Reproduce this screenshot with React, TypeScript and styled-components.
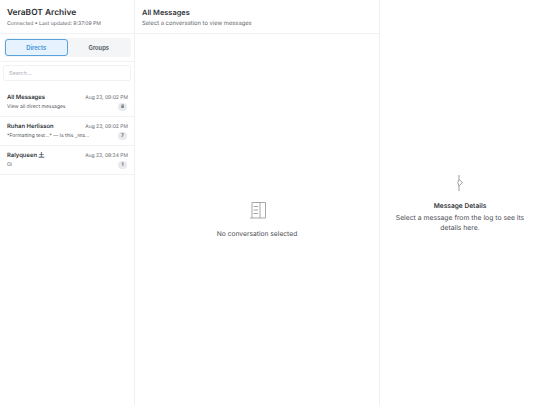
import React from "react";
import styled, { createGlobalStyle } from "styled-components";

const Global = createGlobalStyle`
  html, body { margin: 0; padding: 0; background: #fff; }
  body {
    font-family: Inter, "Liberation Sans", sans-serif;
    color: #18181b;
    text-rendering: geometricPrecision;
  }
  * { box-sizing: border-box; }
`;

const Page = styled.div`
  display: grid;
  grid-template-columns: 135px 245px 160px;
  width: 540px;
  height: 405px;
  overflow: hidden;
`;

const Sidebar = styled.aside`
  display: flex;
  flex-direction: column;
  border-right: 1px solid #eeeff1;
`;

const SideHeader = styled.header`
  height: 34px;
  padding: 8px 7px 0;
  border-bottom: 1px solid #f1f2f4;
`;

const Title = styled.h1`
  margin: 0;
  font-size: 8.4px;
  line-height: 11px;
  font-weight: 600;
  color: #2b2d32;
`;

const Subtitle = styled.p`
  margin: 2px 0 0;
  font-size: 5.1px;
  line-height: 7px;
  color: #63666c;
`;

const TabsWrap = styled.div`
  padding: 4px 3px 4px 4px;
  border-bottom: 1px solid #f1f2f4;
`;

const Tabs = styled.div`
  display: grid;
  grid-template-columns: 1fr 1fr;
  height: 19px;
  padding: 1px;
  border-radius: 3px;
  background: #f4f5f6;
`;

const Tab = styled.button<{ $active?: boolean }>`
  padding: 0;
  border: ${(p) => (p.$active ? "1px solid #5aa2da" : "none")};
  border-radius: 3px;
  background: ${(p) => (p.$active ? "#e6f3fe" : "transparent")};
  color: ${(p) => (p.$active ? "#3a8fd6" : "#4b4e54")};
  font-family: inherit;
  font-size: 5.8px;
  font-weight: 600;
`;

const SearchWrap = styled.div`
  padding: 3px 3px 7px;
`;

const Search = styled.div`
  height: 16px;
  padding: 1px 0 0 5px;
  display: flex;
  align-items: center;
  border: 1px solid #f1f2f4;
  border-radius: 2px;
  font-size: 5.4px;
  color: #aeb1b6;
`;

const Row = styled.div`
  display: grid;
  grid-template-columns: minmax(0, 1fr) auto;
  align-items: center;
  align-content: start;
  height: 29px;
  padding: 5px 6px 0 7px;
  border-bottom: 1px solid #f1f2f4;
`;

const Name = styled.span`
  font-size: 5.9px;
  line-height: 9px;
  font-weight: 600;
  color: #33353a;
`;

const Stamp = styled.span`
  padding-top: 1px;
  font-size: 5px;
  line-height: 8px;
  color: #6b6e74;
  text-align: right;
`;

const Preview = styled.span`
  font-size: 5px;
  line-height: 10px;
  color: #55585e;
  white-space: nowrap;
`;

const Count = styled.span`
  justify-self: end;
  width: 9px;
  height: 8px;
  margin-right: 1px;
  border-radius: 4px;
  background: #e7e9ec;
  color: #4b4e54;
  font-size: 4.8px;
  font-weight: 600;
  line-height: 8px;
  text-align: center;
`;

const Middle = styled.main`
  display: flex;
  flex-direction: column;
  border-right: 1px solid #eeeff1;
`;

const MiddleHeader = styled.header`
  height: 34px;
  padding: 8px 7px 0;
  border-bottom: 1px solid #f1f2f4;
`;

const PaneTitle = styled.h2`
  margin: 0;
  font-size: 7.4px;
  line-height: 9px;
  font-weight: 600;
  color: #33353a;
`;

const PaneSub = styled.p`
  margin: 3px 0 0;
  font-size: 5.8px;
  line-height: 8px;
  color: #63666c;
`;

const Empty = styled.div`
  flex: 1;
  display: flex;
  flex-direction: column;
  align-items: center;
  padding-top: 167px;
`;

const EmptyText = styled.p`
  margin: 10px 0 0;
  font-size: 6.7px;
  line-height: 9px;
  color: #4b4e54;
`;

const Details = styled.section`
  display: flex;
  flex-direction: column;
  align-items: center;
  padding: 175px 14px 0;
`;

const DetailTitle = styled.h3`
  margin: 11px 0 0;
  font-size: 6.6px;
  line-height: 9px;
  font-weight: 600;
  color: #33353a;
`;

const DetailText = styled.p`
  margin: 2px 0 0;
  font-size: 6.8px;
  line-height: 10px;
  color: #4b4e54;
  text-align: center;
`;

const Icon = styled.svg`
  display: block;
  fill: none;
  stroke: #9a9da2;
`;

const rows = [
  ["All Messages", "Aug 23, 09:02 PM", "View all direct messages", "8"],
  ["Ruhan Herlisson", "Aug 23, 09:02 PM", "*Formatting test...* — Is this _rea...", "7"],
  ["Ralyqueen 土", "Aug 23, 08:34 PM", "Oi", "1"],
];

export default function App() {
  return (
    <Page>
      <Global />
      <Sidebar>
        <SideHeader>
          <Title>VeraBOT Archive</Title>
          <Subtitle>Connected • Last updated: 9:37:09 PM</Subtitle>
        </SideHeader>
        <TabsWrap>
          <Tabs>
            <Tab $active>Directs</Tab>
            <Tab>Groups</Tab>
          </Tabs>
        </TabsWrap>
        <SearchWrap>
          <Search>Search...</Search>
        </SearchWrap>
        {rows.map(([name, stamp, preview, count]) => (
          <Row key={name}>
            <Name>{name}</Name>
            <Stamp>{stamp}</Stamp>
            <Preview>{preview}</Preview>
            <Count>{count}</Count>
          </Row>
        ))}
      </Sidebar>
      <Middle>
        <MiddleHeader>
          <PaneTitle>All Messages</PaneTitle>
          <PaneSub>Select a conversation to view messages</PaneSub>
        </MiddleHeader>
        <Empty>
          <Icon width="18" height="19" viewBox="0 0 18 19" strokeWidth="0.9">
            <path d="M4 1.5h13.5v15.5H4zM12 1.5V17M4 17H2" />
            <path d="M5.5 5.5H10M5.5 9H10M5.5 12.5H10" />
          </Icon>
          <EmptyText>No conversation selected</EmptyText>
        </Empty>
      </Middle>
      <Details>
        <Icon width="8" height="16" viewBox="0 0 8 16" strokeWidth="1">
          <path d="M3 0v4.5L6.5 7.5 3 11v5" />
          <path d="M3 4.5 1.8 7.5 3 11" />
        </Icon>
        <DetailTitle>Message Details</DetailTitle>
        <DetailText>Select a message from the log to see its details here.</DetailText>
      </Details>
    </Page>
  );
}
